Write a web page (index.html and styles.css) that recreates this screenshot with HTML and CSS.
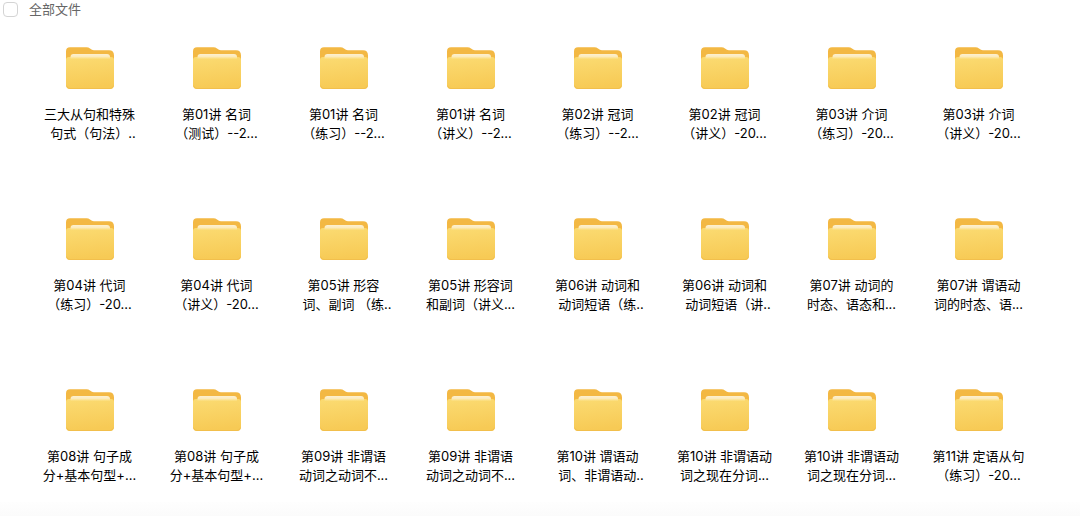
FILE: index.html
```html
<!DOCTYPE html>
<html lang="zh-CN">

<head>
    <meta charset="UTF-8">
    <meta name="viewport" content="width=device-width, initial-scale=1.0">
    <title>全部文件</title>
    <link rel="stylesheet" href="styles.css">
</head>

<body>
    <!-- folder icon, used by every tile -->
    <svg class="icon-defs" aria-hidden="true">
        <defs>
            <linearGradient id="folder-front" x1="0" y1="0" x2="0.15" y2="1">
                <stop offset="0" stop-color="#fbdb72" />
                <stop offset="1" stop-color="#f7ca55" />
            </linearGradient>
            <linearGradient id="folder-paper" x1="0" y1="0" x2="0" y2="1">
                <stop offset="0" stop-color="#fdf0d0" />
                <stop offset="0.5" stop-color="#fcebbc" />
                <stop offset="1" stop-color="#fbdb72" />
            </linearGradient>
        </defs>
        <symbol id="folder" viewBox="0 0 49 43">
            <path d="M1 4.500Q1 0.300 5 0.300H21.500Q23.500 0.300 25 1.500L26.500 2.600Q27.500 3.300 29 3.300H44Q49 3.300 49 8.500V20H1Z" fill="#f3b843" />
            <path d="M1 13Q1 10 4 10H46Q49 10 49 13V38Q49 42 45 42H5Q1 42 1 38Z" fill="url(#folder-front)" />
            <path d="M5.500 10Q5.500 7 8.500 7H42Q45 7 45 10V12H5.500Z" fill="url(#folder-paper)" />
            <path d="M1.500 38.500Q2 41.500 5 41.500H45Q48 41.500 48.500 38.500" fill="none" stroke="#f2bf4c" />
        </symbol>
    </svg>

    <div class="page">
        <header class="toolbar">
            <input type="checkbox" id="select-all" class="checkbox">
            <label for="select-all">全部文件</label>
        </header>

        <main class="file-grid">
            <a class="file" href="#"><svg class="file-icon"><use href="#folder" /></svg><span>三大从句和特殊</span><span class="cut">句式（句法）..</span></a>
            <a class="file" href="#"><svg class="file-icon"><use href="#folder" /></svg><span>第01讲 名词</span><span>（测试）--2...</span></a>
            <a class="file" href="#"><svg class="file-icon"><use href="#folder" /></svg><span>第01讲 名词</span><span>（练习）--2...</span></a>
            <a class="file" href="#"><svg class="file-icon"><use href="#folder" /></svg><span>第01讲 名词</span><span>（讲义）--2...</span></a>
            <a class="file" href="#"><svg class="file-icon"><use href="#folder" /></svg><span>第02讲 冠词</span><span>（练习）--2...</span></a>
            <a class="file" href="#"><svg class="file-icon"><use href="#folder" /></svg><span>第02讲 冠词</span><span>（讲义）-20...</span></a>
            <a class="file" href="#"><svg class="file-icon"><use href="#folder" /></svg><span>第03讲 介词</span><span>（练习）-20...</span></a>
            <a class="file" href="#"><svg class="file-icon"><use href="#folder" /></svg><span>第03讲 介词</span><span>（讲义）-20...</span></a>

            <a class="file" href="#"><svg class="file-icon"><use href="#folder" /></svg><span>第04讲 代词</span><span>（练习）-20...</span></a>
            <a class="file" href="#"><svg class="file-icon"><use href="#folder" /></svg><span>第04讲 代词</span><span>（讲义）-20...</span></a>
            <a class="file" href="#"><svg class="file-icon"><use href="#folder" /></svg><span>第05讲 形容</span><span class="cut">词、副词 （练..</span></a>
            <a class="file" href="#"><svg class="file-icon"><use href="#folder" /></svg><span>第05讲 形容词</span><span>和副词（讲义...</span></a>
            <a class="file" href="#"><svg class="file-icon"><use href="#folder" /></svg><span>第06讲 动词和</span><span class="cut">动词短语（练..</span></a>
            <a class="file" href="#"><svg class="file-icon"><use href="#folder" /></svg><span>第06讲 动词和</span><span class="cut">动词短语（讲..</span></a>
            <a class="file" href="#"><svg class="file-icon"><use href="#folder" /></svg><span>第07讲 动词的</span><span>时态、语态和...</span></a>
            <a class="file" href="#"><svg class="file-icon"><use href="#folder" /></svg><span>第07讲 谓语动</span><span>词的时态、语...</span></a>

            <a class="file" href="#"><svg class="file-icon"><use href="#folder" /></svg><span>第08讲 句子成</span><span>分+基本句型+...</span></a>
            <a class="file" href="#"><svg class="file-icon"><use href="#folder" /></svg><span>第08讲 句子成</span><span>分+基本句型+...</span></a>
            <a class="file" href="#"><svg class="file-icon"><use href="#folder" /></svg><span>第09讲 非谓语</span><span>动词之动词不...</span></a>
            <a class="file" href="#"><svg class="file-icon"><use href="#folder" /></svg><span>第09讲 非谓语</span><span>动词之动词不...</span></a>
            <a class="file" href="#"><svg class="file-icon"><use href="#folder" /></svg><span>第10讲 谓语动</span><span class="cut">词、非谓语动..</span></a>
            <a class="file" href="#"><svg class="file-icon"><use href="#folder" /></svg><span>第10讲 非谓语动</span><span>词之现在分词...</span></a>
            <a class="file" href="#"><svg class="file-icon"><use href="#folder" /></svg><span>第10讲 非谓语动</span><span>词之现在分词...</span></a>
            <a class="file" href="#"><svg class="file-icon"><use href="#folder" /></svg><span>第11讲 定语从句</span><span>（练习）-20...</span></a>
        </main>

        <div class="bottom-fade"></div>
    </div>
</body>

</html>
```

FILE: styles.css
```css
* {
    box-sizing: border-box;
}

body {
    margin: 0;
    background: #fff;
    color: #000;
    font-family: Inter, "Noto Sans CJK SC", sans-serif;
    font-size: 13px;
    line-height: 19px;
}

.icon-defs {
    position: absolute;
    width: 0;
    height: 0;
}

.page {
    display: flex;
    flex-direction: column;
    min-height: 100vh;
}

.toolbar {
    display: flex;
    align-items: center;
    gap: 11px;
    padding-left: 3px;
    color: #666;
}

.checkbox {
    appearance: none;
    width: 15px;
    height: 15px;
    margin: 0;
    border: 1px solid #d4d4d4;
    border-radius: 4px;
    background: #fff;
}

.checkbox:checked {
    background: #f6cb55;
}

.file-grid {
    display: grid;
    grid-template-columns: repeat(8, 1fr);
    row-gap: 75px;
    padding: 28px 38px 17px 26px;
}

.file {
    display: flex;
    flex-direction: column;
    align-items: center;
    color: inherit;
    text-decoration: none;
    white-space: nowrap;
}

.file-icon {
    width: 49px;
    height: 43px;
    margin-bottom: 15px;
}

/* names cut off before the last dot */
.cut {
    padding-left: 7px;
}

.bottom-fade {
    flex: 1;
    background: linear-gradient(#fefefe, #fbfbfb);
}
```
